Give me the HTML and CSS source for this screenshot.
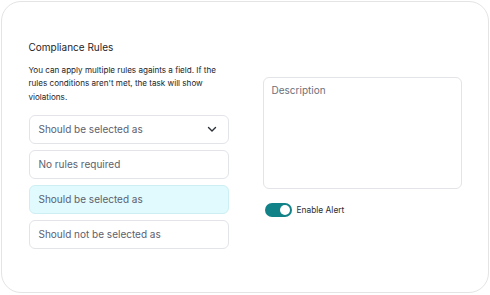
FILE: index.html
```html
<!DOCTYPE html>
<html lang="en">
<head>
    <meta charset="UTF-8">
    <title>Compliance Rules</title>
    <link rel="stylesheet" href="styles.css">
</head>
<body>
    <div class="card">
        <div class="rules-col">
            <div class="rules-title">Compliance Rules</div>
            <p class="rules-help">You can apply multiple rules againts a field. If the rules conditions aren't met, the task will show violations.</p>
            <div class="rule-select">
                <span>Should be selected as</span>
                <svg class="chevron" width="12" height="12" viewBox="0 0 12 12">
                    <path d="M2.5 4.5 L6 8 L9.5 4.5" fill="none" stroke="#2b2f38" stroke-width="1.4" stroke-linecap="round" stroke-linejoin="round"/>
                </svg>
            </div>
            <div class="rule-option">No rules required</div>
            <div class="rule-option active">Should be selected as</div>
            <div class="rule-option">Should not be selected as</div>
        </div>
        <div class="side-col">
            <div class="description">Description</div>
            <label class="alert-toggle">
                <span class="switch"><span class="knob"></span></span>
                <span>Enable Alert</span>
            </label>
        </div>
    </div>
</body>
</html>
```

FILE: styles.css
```css
* {
    margin: 0;
    padding: 0;
    box-sizing: border-box;
}

body {
    font-family: 'Inter', 'Noto Sans', sans-serif;
    background: #fff;
    color: #1f2329;
}

.card {
    margin: 1px;
    width: 488px;
    height: 292px;
    border: 1.5px solid #e4e4e4;
    border-radius: 20px;
    padding: 38px 26px 0 26.5px;
    display: grid;
    grid-template-columns: 200px 199px;
    column-gap: 34px;
    align-items: start;
}

.rules-title {
    font-size: 10px;
    line-height: 14px;
    color: #1f2329;
    margin-bottom: 10px;
}

.rules-help {
    font-size: 8.1px;
    line-height: 13.3px;
    color: #22262d;
    margin-bottom: 11px;
}

.rule-select,
.rule-option {
    height: 29px;
    border: 1px solid #e2e4e8;
    border-radius: 6px;
    padding: 0 9px;
    display: flex;
    align-items: center;
    font-size: 10px;
    color: #5b6170;
    margin-bottom: 6px;
}

.rule-select {
    justify-content: space-between;
    padding-right: 10px;
}

.rule-option.active {
    background: #e1fafd;
    border-color: #cdeff3;
}

.side-col {
    padding-top: 37px;
}

.description {
    height: 112px;
    border: 1px solid #e2e4e8;
    border-radius: 6px;
    padding: 6px 8px;
    font-size: 10px;
    color: #6c707a;
    margin-bottom: 14px;
}

.alert-toggle {
    display: flex;
    align-items: center;
    gap: 5px;
    font-size: 8.4px;
    color: #2b2f36;
    padding-left: 2px;
}

.switch {
    width: 27px;
    height: 14px;
    border-radius: 7px;
    background: #118388;
    display: flex;
    align-items: center;
    justify-content: flex-end;
    padding-right: 2px;
}

.knob {
    width: 10px;
    height: 10px;
    border-radius: 50%;
    background: #fff;
}
```
